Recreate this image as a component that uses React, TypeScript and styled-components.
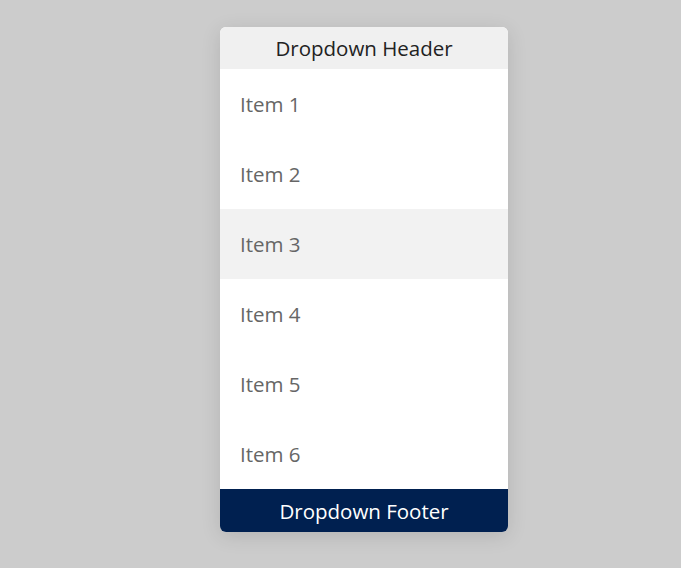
import React from "react";
import styled, { createGlobalStyle } from "styled-components";

const Global = createGlobalStyle`
  html, body { margin: 0; padding: 0; background: #cccccc; }
  body { font-family: "Open Sans", "Noto Sans", sans-serif; }
`;

const Page = styled.div`
  width: 681px;
  height: 568px;
  display: flex;
  justify-content: flex-start;
  padding: 27px 0 0 220px;
  box-sizing: border-box;
`;

const Card = styled.div`
  width: 288px;
  height: fit-content;
  background: #ffffff;
  border-radius: 6px;
  overflow: hidden;
  box-shadow: 0 4px 20px rgba(0, 0, 0, 0.12);
  display: flex;
  flex-direction: column;
`;

const Header = styled.div`
  height: 42px;
  background: #f0f0f0;
  color: #222;
  font-size: 20.5px;
  display: flex;
  align-items: center;
  justify-content: center;
`;

const Item = styled.div<{ $active?: boolean }>`
  height: 70px;
  padding-left: 20px;
  display: flex;
  align-items: center;
  font-size: 20.5px;
  color: #666;
  background: ${(p) => (p.$active ? "#f2f2f2" : "#ffffff")};
`;

const Footer = styled.div`
  height: 43px;
  background: #002050;
  color: #ffffff;
  font-size: 20.5px;
  font-weight: 500;
  display: flex;
  align-items: center;
  justify-content: center;
`;

export default function App() {
  const items = ["Item 1", "Item 2", "Item 3", "Item 4", "Item 5", "Item 6"];
  return (
    <>
      <Global />
      <Page>
        <Card>
          <Header>Dropdown Header</Header>
          {items.map((it, i) => (
            <Item key={it} $active={i === 2}>
              {it}
            </Item>
          ))}
          <Footer>Dropdown Footer</Footer>
        </Card>
      </Page>
    </>
  );
}
